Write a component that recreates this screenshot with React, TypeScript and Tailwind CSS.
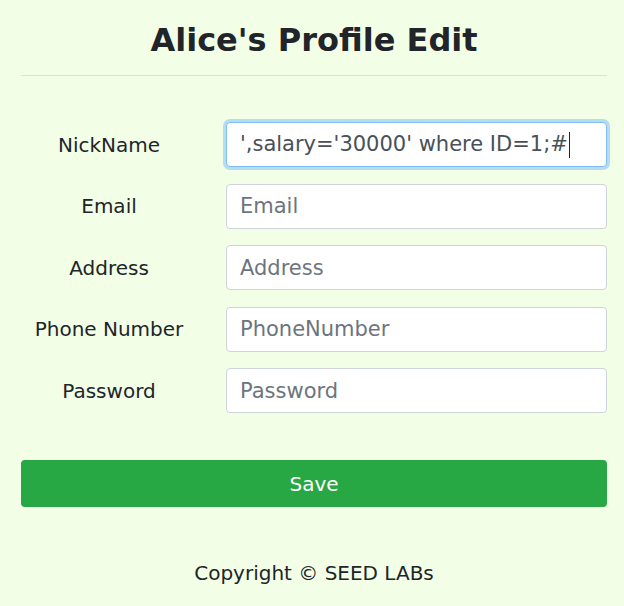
import React from 'react';

const fields = [
  { label: 'Email', placeholder: 'Email' },
  { label: 'Address', placeholder: 'Address' },
  { label: 'Phone Number', placeholder: 'PhoneNumber' },
  { label: 'Password', placeholder: 'Password' },
];

export default function App() {
  return (
    <div
      className="h-[606px] w-[624px] overflow-hidden bg-[#f3fee6] text-[#212529]"
      style={{ fontFamily: '"DejaVu Sans", Verdana, sans-serif' }}
    >
      <div className="ml-[21px] w-[586px] pt-[21px]">
        <h1 className="text-center text-[32px] font-bold leading-[38px]">Alice's Profile Edit</h1>
        <hr className="mt-[16px] border-0 border-t border-[#dde3d4]" />

        <form className="mt-[46px] flex flex-col gap-y-[16.5px]" onSubmit={(e) => e.preventDefault()}>
          <div className="flex items-center">
            <label className="w-[176px] text-center text-[20px] leading-[30px]">NickName</label>
            <div className="ml-[29px] flex h-[45px] flex-1 items-center rounded-[4px] border border-[#80bdff] bg-white pl-[13px] text-[21px] text-[#495057] shadow-[0_0_0_3px_rgba(0,123,255,0.25)]">
              <span className="whitespace-pre">',salary='30000' where ID=1;#</span>
              <span className="ml-[1px] inline-block h-[26px] w-[1.5px] bg-[#212529]" />
            </div>
          </div>

          {fields.map((f) => (
            <div key={f.label} className="flex items-center">
              <label className="w-[176px] text-center text-[20px] leading-[30px]">{f.label}</label>
              <input
                type={f.label === 'Password' ? 'password' : 'text'}
                placeholder={f.placeholder}
                className="ml-[29px] h-[45px] min-w-0 flex-1 rounded-[4px] border border-[#ced4da] bg-white pl-[13px] text-[21px] text-[#495057] placeholder:text-[#6c757d] outline-none"
              />
            </div>
          ))}

          <button
            type="submit"
            className="mt-[30.5px] h-[47px] w-full rounded-[4px] bg-[#28a745] text-[20px] text-white"
          >
            Save
          </button>
        </form>

        <p className="mt-[51px] text-center text-[20px] leading-[30px]">Copyright © SEED LABs</p>
      </div>
    </div>
  );
}
